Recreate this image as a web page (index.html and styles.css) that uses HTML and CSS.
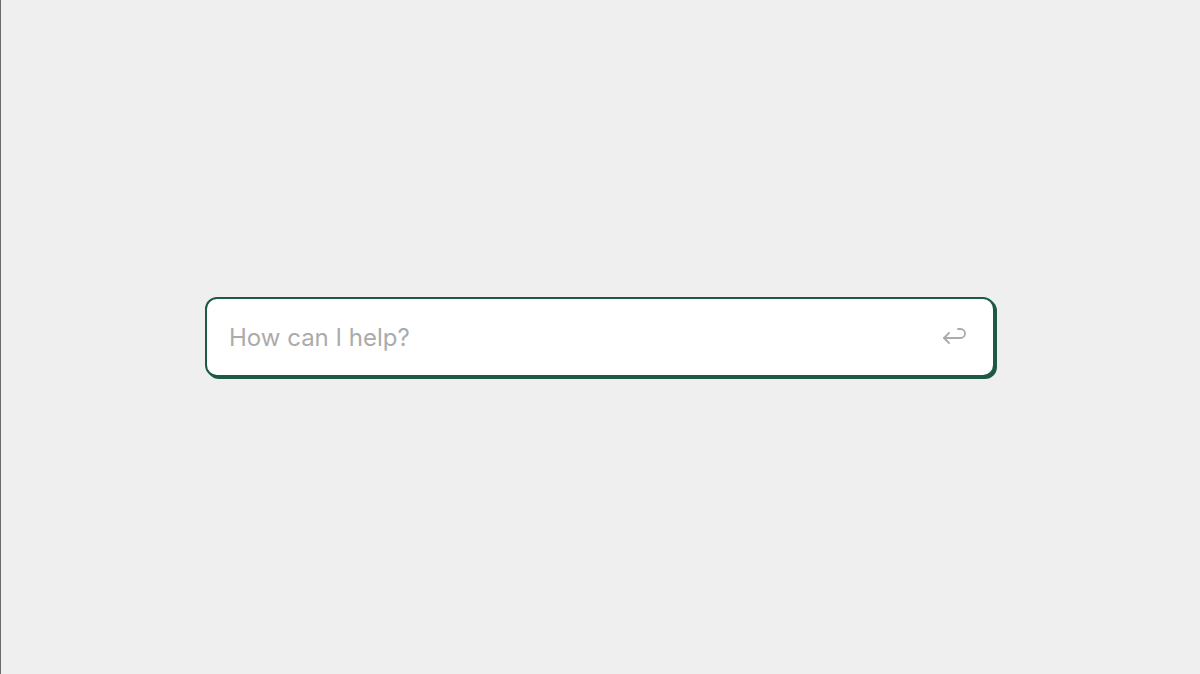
FILE: index.html
```html
<!DOCTYPE html>
<html>
<head>
<meta charset="utf-8">
<link rel="stylesheet" href="styles.css">
</head>
<body>
<div class="stage">
  <div class="prompt">
    <span class="placeholder">How can I help?</span>
    <svg class="enter" width="26" height="22" viewBox="0 0 26 22" fill="none" stroke="#ababab" stroke-width="1.8" stroke-linecap="round" stroke-linejoin="round">
      <path d="M17 3h2.5a4.5 4.5 0 0 1 0 9H3"/>
      <path d="M8 7l-5 5 5 5"/>
    </svg>
  </div>
</div>
</body>
</html>
```
FILE: styles.css
```css
html, body {
  margin: 0;
  padding: 0;
  height: 100%;
}
body {
  background: #efefef;
  font-family: Inter, "Noto Sans", sans-serif;
  box-shadow: inset 1px 0 0 #6a6a6a;
}
.stage {
  height: 100%;
  display: flex;
  align-items: center;
  justify-content: center;
}
.prompt {
  box-sizing: border-box;
  width: 790px;
  height: 80px;
  background: #fff;
  border: 2px solid #1d5a44;
  border-radius: 12px;
  box-shadow: 2px 2px 0 #1d5a44;
  display: flex;
  align-items: center;
  justify-content: space-between;
  padding: 0 26px 0 22px;
}
.placeholder {
  color: #ababab;
  font-size: 24px;
  letter-spacing: 0;
}
.enter {
  display: block;
}
```
